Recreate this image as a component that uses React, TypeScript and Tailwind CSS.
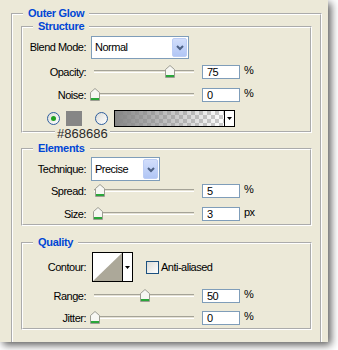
import React from "react";

type GroupProps = { title: string; className?: string; children: React.ReactNode };

// Etched group box; the title sits over the top line like a legend.
function Group({ title, className = "", children }: GroupProps) {
  return (
    <div className={["relative border-2 border-white [border-style:groove]", className].join(" ")}>
      <span className="absolute left-2.5 -top-2 bg-[#ece9d8] px-[5px] text-[11px] leading-[13px] font-bold tracking-[-0.3px] text-[#0046d5]">
        {title}
      </span>
      {children}
    </div>
  );
}

function Label({ children }: { children: React.ReactNode }) {
  return <span className="w-[63px] shrink-0 text-right">{children}</span>;
}

function Arrow() {
  return (
    <svg width="5" height="3" viewBox="0 0 5 3" className="block">
      <polygon points="0,0 5,0 2.5,3" fill="#000" />
    </svg>
  );
}

function Select({ value, className = "" }: { value: string; className?: string }) {
  return (
    <div className={["flex border border-[#7f9db9] bg-white p-[1px]", className].join(" ")}>
      <span className="flex flex-1 items-center pl-[2px]">{value}</span>
      <span className="flex w-[15px] items-center justify-center rounded-[2px] border border-[#bccdf5] bg-gradient-to-b from-[#d2defb] to-[#b1c6f5]">
        <svg width="8" height="6" viewBox="0 0 8 6" className="mt-[1px] block">
          <polyline points="1,1 4,4 7,1" fill="none" stroke="#4d6185" strokeWidth="2" />
        </svg>
      </span>
    </div>
  );
}

function Slider({ value }: { value: number }) {
  return (
    <div className="relative ml-[4px] h-[14px] w-[110px] shrink-0">
      <div className="absolute left-[4px] top-[5px] h-[3px] w-[100px] border-y border-t-[#a5a397] border-b-white bg-[#e4e1d4]" />
      <svg width="10" height="13" viewBox="0 0 10 13" className="absolute top-0 block" style={{ left: value }}>
        <path d="M0.5 4.5 L5 0.5 L9.5 4.5 V12.5 H0.5 Z" fill="#f7f7f3" stroke="#9c9d92" />
        <rect x="1" y="10" width="8" height="2" fill="#2aa63a" />
      </svg>
    </div>
  );
}

function NumField({ value, unit }: { value: string; unit: string }) {
  return (
    <div className="flex items-start">
      <input
        readOnly
        value={value}
        className="ml-[2px] h-[14px] w-[38px] border border-[#7f9db9] bg-white px-[4px] text-[11px] leading-[12px] outline-none"
      />
      <span className="ml-[4px] text-[11px] leading-[11px]">{unit}</span>
    </div>
  );
}

function SliderRow({ label, value, unit, className = "" }: { label: string; value: number; unit: string; className?: string }) {
  return (
    <div className={["flex items-center", className].join(" ")}>
      <Label>{label}</Label>
      <Slider value={value} />
      <NumField value={String(value)} unit={unit} />
    </div>
  );
}

function Radio({ checked = false }: { checked?: boolean }) {
  return (
    <span className="flex h-[13px] w-[13px] shrink-0 items-center justify-center rounded-full border border-[#2f5f9e] bg-gradient-to-br from-[#dcdcd7] to-white">
      {checked && <span className="h-[5px] w-[5px] rounded-full bg-[#21a121]" />}
    </span>
  );
}

export default function App() {
  return (
    <div className="h-[350px] w-[338px] bg-white font-['Liberation_Sans',Arial,sans-serif] text-[11px] tracking-[-0.5px] text-black">
      <div className="h-[342px] w-[328px] overflow-hidden bg-[#ece9d8] pl-[11px] pt-[13px] shadow-[3px_3px_8px_rgba(0,0,0,0.65)]">
        <Group title="Outer Glow" className="h-[400px] w-[311px] px-[8px] pt-[11px]">
          <Group title="Structure" className="h-[107px] pt-[8px]">
            <div className="flex items-center">
              <Label>Blend Mode:</Label>
              <Select value="Normal" className="ml-[5px] h-[23px] w-[98px]" />
            </div>
            <SliderRow label="Opacity:" value={75} unit="%" className="mt-[5px]" />
            <SliderRow label="Noise:" value={0} unit="%" className="mt-[6px]" />
            <div className="mt-[7px] flex h-[17px] items-center pl-[24px]">
              <Radio checked />
              <span className="relative ml-[6px] h-[16px] w-[16px] bg-[#868686]">
                <span className="absolute left-[-11px] top-[15px] whitespace-nowrap bg-[#ece9d8] px-[2px] text-[13px] leading-[15px] tracking-normal text-[#2a2a2a]">
                  #868686
                </span>
              </span>
              <span className="ml-[13px]">
                <Radio />
              </span>
              <div className="ml-[6px] flex h-[17px] w-[121px] border border-black bg-white">
                <div className="flex-1 [background-image:repeating-conic-gradient(#cccccc_0%_25%,#ffffff_0%_50%)] [background-size:8px_8px]">
                  <div className="h-full w-full bg-gradient-to-r from-[#868686] to-[#86868600]" />
                </div>
                <div className="flex w-[10px] items-center justify-center border-l border-black">
                  <Arrow />
                </div>
              </div>
            </div>
          </Group>

          <Group title="Elements" className="mt-[15px] h-[78px] pt-[7px]">
            <div className="flex items-center">
              <Label>Technique:</Label>
              <Select value="Precise" className="ml-[5px] h-[24px] w-[69px]" />
            </div>
            <SliderRow label="Spread:" value={5} unit="%" className="mt-[2px]" />
            <SliderRow label="Size:" value={3} unit="px" className="mt-[6px]" />
          </Group>

          <Group title="Quality" className="mt-[16px] h-[88px] pt-[8px]">
            <div className="flex items-center">
              <Label>Contour:</Label>
              <div className="ml-[6px] flex h-[30px] w-[41px] border border-black bg-white">
                <svg width="29" height="28" viewBox="0 0 29 28" className="block">
                  <polygon points="0,28 29,0 29,28" fill="#aca899" />
                </svg>
                <div className="flex w-[10px] items-center justify-center border-l border-black">
                  <Arrow />
                </div>
              </div>
              <span className="ml-[13px] h-[13px] w-[13px] border border-[#1c5180] bg-gradient-to-br from-[#dcdcd7] to-white" />
              <span className="ml-[2px]">Anti-aliased</span>
            </div>
            <SliderRow label="Range:" value={50} unit="%" className="mt-[6px]" />
            <SliderRow label="Jitter:" value={0} unit="%" className="mt-[5px]" />
          </Group>
        </Group>
      </div>
    </div>
  );
}
